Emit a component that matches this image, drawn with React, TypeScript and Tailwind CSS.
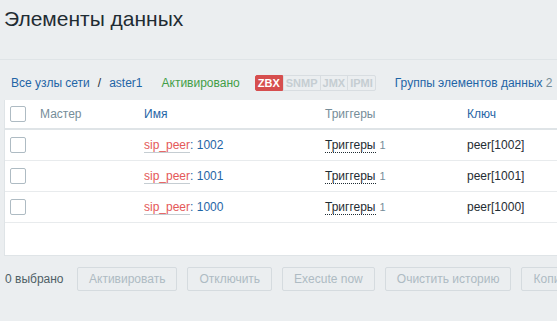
import React from "react";

const rows = ["1002", "1001", "1000"];

const Checkbox = () => (
  <span className="block w-[16px] h-[16px] rounded-[2px] border border-[#aebbc3] bg-white" />
);

const Badge = ({ label, active }: { label: string; active?: boolean }) =>
  active ? (
    <span className="px-[2px] h-[16px] leading-[14px] text-[11px] font-bold text-white bg-[#d64e4e] border border-[#d64e4e] rounded-l-[2px]">
      {label}
    </span>
  ) : (
    <span className="px-[2px] h-[16px] leading-[14px] text-[11px] font-bold text-[#c5cdd2] border border-[#d8dde1] -ml-px first:ml-0 last:rounded-r-[2px]">
      {label}
    </span>
  );

const Button = ({ children }: { children: React.ReactNode }) => (
  <button className="h-[24px] px-[11px] text-[12px] text-[#aebbc3] bg-[#ebeef0] border border-[#d5dbdf] rounded-[2px] whitespace-nowrap shrink-0">
    {children}
  </button>
);

export default function App() {
  return (
    <div className="w-[557px] h-[321px] overflow-hidden bg-[#ebeef0] text-[12px] text-[#1f2c33] font-['Liberation_Sans',Arial,sans-serif]">
      <div className="w-[760px]">
        <div className="h-[60px] border-b border-[#dfe4e7] pl-[4px] pt-[7px]">
          <h1 className="text-[21px] leading-[24px] font-normal">Элементы данных</h1>
        </div>

        <div className="flex items-center h-[24px] mt-[11px] pl-[11px]">
          <a className="text-[#1f65a6]">Все узлы сети</a>
          <span className="mx-[8px] text-[#1f2c33]">/</span>
          <a className="text-[#1f65a6]">aster1</a>
          <span className="ml-[19px] text-[#429e47]">Активировано</span>
          <div className="flex ml-[15px]">
            <Badge label="ZBX" active />
            <div className="flex">
              <Badge label="SNMP" />
              <Badge label="JMX" />
              <Badge label="IPMI" />
            </div>
          </div>
          <a className="ml-[19px] text-[#1f65a6] whitespace-nowrap">
            Группы элементов данных <span className="text-[#768d99]">2</span>
          </a>
        </div>

        <div className="mt-[5px] ml-[4px] bg-white border-l border-b border-[#dfe4e7]">
          <div className="grid grid-cols-[35px_104px_181px_142px_1fr] items-center h-[30px] border-b-2 border-[#dfe4e7]">
            <div className="pl-[5px]">
              <Checkbox />
            </div>
            <div className="text-[#768d99]">Мастер</div>
            <div className="text-[#1f65a6]">Имя</div>
            <div className="text-[#768d99]">Триггеры</div>
            <div className="text-[#1f65a6]">Ключ</div>
          </div>
          {rows.map((n) => (
            <div
              key={n}
              className="grid grid-cols-[35px_104px_181px_142px_1fr] items-center h-[31px] border-b border-[#e8ebed]"
            >
              <div className="pl-[5px]">
                <Checkbox />
              </div>
              <div />
              <div>
                <a className="text-[#e45959] border-b border-[#c5cdd2]">sip_peer</a>
                <span className="text-[#1f65a6]">: {n}</span>
              </div>
              <div>
                <a className="border-b border-dotted border-[#1f2c33]">Триггеры</a>
                <span className="ml-[4px] text-[11px] text-[#768d99]">1</span>
              </div>
              <div>peer[{n}]</div>
            </div>
          ))}
          <div className="h-[32px]" />
        </div>

        <div className="flex items-center gap-[10px] mt-[11px]">
          <span className="pl-[5px] w-[77px] shrink-0 -mr-[10px] text-[#4f5f66]">0 выбрано</span>
          <Button>Активировать</Button>
          <Button>Отключить</Button>
          <Button>Execute now</Button>
          <Button>Очистить историю</Button>
          <Button>Копировать</Button>
        </div>
      </div>
    </div>
  );
}
